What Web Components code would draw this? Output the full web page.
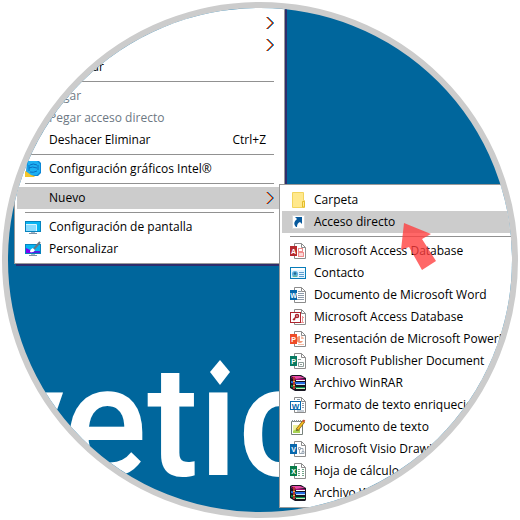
<!DOCTYPE html>
<html lang="es">
<head>
<meta charset="utf-8">
<meta name="viewport" content="width=device-width, initial-scale=1">
<title>Menú contextual del escritorio</title>
<style>
  body {
    margin: 0;
    background: white;
    font-family: "Open Sans", "Noto Sans", sans-serif;
  }

  .main-menu {
    left: 6px;
    top: -1px;
    width: 271px;
  }

  .sub-menu {
    left: 271px;
    top: 176px;
    width: 250px;
  }

  .logo {
    left: -20px;
    top: 334px;
  }

  .pointer {
    left: 393px;
    top: 215px;
  }
</style>
</head>
<body>
<round-frame>
  <brand-wordmark class="logo">vetic</brand-wordmark>

  <context-menu class="main-menu" shadow>
    <menu-entry submenu>Ver</menu-entry>
    <menu-entry submenu>Ordenar por</menu-entry>
    <menu-entry>Actualizar</menu-entry>
    <menu-divider></menu-divider>
    <menu-entry disabled>Pegar</menu-entry>
    <menu-entry disabled>Pegar acceso directo</menu-entry>
    <menu-entry shortcut="Ctrl+Z">Deshacer Eliminar</menu-entry>
    <menu-divider></menu-divider>
    <menu-entry icon="intel">Configuración gráficos Intel®</menu-entry>
    <menu-divider></menu-divider>
    <menu-entry submenu active>Nuevo</menu-entry>
    <menu-divider></menu-divider>
    <menu-entry icon="display">Configuración de pantalla</menu-entry>
    <menu-entry icon="personalize">Personalizar</menu-entry>
  </context-menu>

  <context-menu class="sub-menu">
    <menu-entry icon="folder">Carpeta</menu-entry>
    <menu-entry icon="shortcut" active>Acceso directo</menu-entry>
    <menu-divider></menu-divider>
    <menu-entry icon="access">Microsoft Access Database</menu-entry>
    <menu-entry icon="contact">Contacto</menu-entry>
    <menu-entry icon="word">Documento de Microsoft Word</menu-entry>
    <menu-entry icon="accesskey">Microsoft Access Database</menu-entry>
    <menu-entry icon="powerpoint">Presentación de Microsoft PowerPoint</menu-entry>
    <menu-entry icon="publisher">Microsoft Publisher Document</menu-entry>
    <menu-entry icon="winrar">Archivo WinRAR</menu-entry>
    <menu-entry icon="rtf">Formato de texto enriquecido</menu-entry>
    <menu-entry icon="text">Documento de texto</menu-entry>
    <menu-entry icon="visio">Microsoft Visio Drawing</menu-entry>
    <menu-entry icon="excel">Hoja de cálculo de Microsoft Excel</menu-entry>
    <menu-entry icon="winrar">Archivo WinRAR ZIP</menu-entry>
  </context-menu>

  <red-pointer class="pointer"></red-pointer>
</round-frame>

<script>
// sheet of paper with a folded corner, shared by the Office icons
const page = `
  <path d="M4.5 3V.5h7l4 4v11h-11V13" fill="#fff" stroke="#8c8c8c"/>
  <path d="M11.5.5v4h4" fill="none" stroke="#8c8c8c"/>`;

const badge = (color, letter) => `
  <rect y="3" width="7" height="10" fill="${color}"/>
  <text x="3.5" y="10.6" text-anchor="middle" font-family="Liberation Sans, sans-serif"
    font-weight="700" font-size="7" fill="#fff">${letter}</text>`;

const icons = {
  intel: `
    <path d="M2 0h12l2 2v10l-3 3H4l-3-3z" fill="#0b86d6"/>
    <path d="M3 0h9l3 3v8l-3 3H5l-3-3z" fill="#1cb0f2"/>
    <path d="M5 4q3-2 7 0M4 7q3-2 8 0M5 11q3 1 7-1M4 4v6M13 4v5" fill="none" stroke="#0a6fc0"/>
    <path d="M0 10l2 1 4 3 4 1-1 1H0z" fill="#f2c52c"/>`,
  display: `
    <rect x=".5" y="2.5" width="15" height="10" fill="#08b5f2" stroke="#0783bd"/>
    <path d="M1 6h10v6H1z" fill="#8bdcff"/>
    <path d="M1 5.5h10.5V12" fill="none" stroke="#d9f5ff"/>
    <path d="M6 13h4v1H6z" fill="#a4b5c4"/><path d="M4 14h8v1H4z" fill="#7d93a8"/>`,
  personalize: `
    <rect x=".5" y="3.5" width="15" height="9" fill="#08b5f2" stroke="#0783bd"/>
    <path d="M1 7l4 2 3 3H1z" fill="#7b00f2"/><path d="M8 10h7v2H7z" fill="#5320df"/>
    <path d="M5 11q0-3 3-4l2 2q-1 3-5 2z" fill="#fff"/>
    <path d="M9 8l6-7" stroke="#687784" stroke-width="2"/>
    <path d="M6 13h4v1H6z" fill="#a4b5c4"/><path d="M4 14h8v1H4z" fill="#7d93a8"/>`,
  folder: `
    <path d="M2.5.5h11v8h1v7h-12z" fill="#ffe88c" stroke="#f2d45c"/>
    <path d="M12.5 15V9.5h2V15z" fill="#ffe88c" stroke="#e3bc2a"/>`,
  shortcut: `
    <rect x="2.5" y="1.5" width="12" height="13" fill="#fff" stroke="#d9d9d9"/>
    <path d="M5 3h7v7l-2-2q-3 1-3 5H6q-4-4 1-8z" fill="#07599c"/>`,
  access: page + `
    <rect x="8.5" y="5.5" width="4" height="3" fill="#fff" stroke="#ef8c8c"/>
    <rect x="8.5" y="9.5" width="5" height="4" fill="#fbd6d6" stroke="#ef8c8c"/>
    ` + badge("#b5292e", "A"),
  contact: `
    <rect x=".5" y="2.5" width="15" height="11" fill="#e5f5ff" stroke="#087cb9"/>
    <path d="M1 3h14v2H1z" fill="#fff"/>
    <circle cx="5" cy="9" r="3" fill="#5bb0e0"/>
    <circle cx="5" cy="8.5" r="1.3" fill="#23668c"/>
    <path d="M2 12q3-3 6 0z" fill="#62b894"/>
    <path d="M9 7.5h5M9 9.5h5M9 11.5h5" stroke="#5f9fd0"/>`,
  word: page + `
    <path d="M8 4.500h3M8 6.500h6M8 8.500h6M8 10.500h6M7 12.500h7" stroke="#8c9aaa"/>
    ` + badge("#0868ad", "W"),
  accesskey: page + `
    <path d="M12.5 7v7M10 13.500h4M12 8.500h2" stroke="#ef9a9a"/>
    <rect x=".5" y="3.5" width="10" height="10" fill="#fff" stroke="#ad252e"/>
    <circle cx="7" cy="7" r="1.500" fill="none" stroke="#ad252e" stroke-width="1.500"/>
    <path d="M6 8l-3 3M4 10l1 1" stroke="#ad252e" stroke-width="1.500"/>`,
  powerpoint: page + `
    <path d="M10 5a3.500 3.500 0 1 0 3 5h-3z" fill="#ef9877"/>
    <path d="M11 5v3h3q0-2-3-3z" fill="#f4bba5"/>
    <path d="M8 13.500h6" stroke="#f4bba5"/>
    ` + badge("#ef4b27", "P"),
  publisher: page + `
    <path d="M8 6.500h3M8.500 9.500h5v4h-5zM10 11.500h2" fill="none" stroke="#8c9c98"/>
    ` + badge("#087b62", "P"),
  winrar: `
    <path d="M0 1l2-1h9l5 3v12l-1 1H5l-5-3z" fill="#171421"/>
    <path d="M1 1h9l5 2-9 1z" fill="#e74ba8"/><path d="M1 2l5 2h9v1H6L1 3z" fill="#a30b71"/>
    <path d="M6 5h9v1H6z" fill="#fff"/>
    <path d="M1 6l5 1h9v2H6L1 8z" fill="#276be1"/><path d="M6 9h9v1H6z" fill="#bfe6ff"/>
    <path d="M1 10l5 2h9v1H6l-5-1z" fill="#079451"/><path d="M6 13h9v1H6z" fill="#c5f0bd"/>
    <path d="M3 2h2v12H3z" fill="#b43631"/><path d="M3 6h2v1H3zM3 10h2v1H3z" fill="#f2bd45"/>`,
  rtf: page + `
    <path d="M7 2.500h3M12 6.500h2M12 8.500h2M12 10.500h2M7 14h7" stroke="#8c9aaa"/>
    <rect x=".5" y="4.5" width="10" height="8" fill="#fff" stroke="#0868ad"/>
    <text x="5.5" y="11.5" text-anchor="middle" font-family="Liberation Sans, sans-serif"
      font-weight="700" font-size="8" fill="#0868ad">W</text>`,
  text: `
    <path d="M1.5 2.5h11v13h-11z" fill="#fff" stroke="#77817b"/>
    <path d="M2.500 1v2M4.500 1v2M6.500 1v2M8.500 1v2M10.500 1v2" stroke="#8f9698"/>
    <path d="M3 6h7v8H3z" fill="#eff29c"/><path d="M3 12l7-4v6H3z" fill="#a8d453"/>
    <path d="M7 11l7-9" stroke="#805c16" stroke-width="3"/>
    <path d="M7 11l7-9" stroke="#f2bd20" stroke-width="2"/>
    <path d="M13 3l1.500-2" stroke="#c94b37" stroke-width="2"/>
    <path d="M6 12l1-2 1 1z" fill="#333"/>`,
  visio: page + `
    <path d="M8.500 6.500h2v2h-2zM12 10.500h2v2h-2zM10.500 7.500h2.500V10M9.500 9v3.500H12" fill="none" stroke="#9aa7b5"/>
    ` + badge("#0868ad", "V"),
  excel: page + `
    <path d="M8 6.500h2M12 6.500h2M8 8.500h2M12 8.500h2M8 10.500h2M12 10.500h2M8 12.500h2M12 12.500h2" stroke="#73a88a"/>
    ` + badge("#087b48", "X")
};

class RoundFrame extends HTMLElement {
  constructor() {
    super();
    this.attachShadow({ mode: "open" });
    this.shadowRoot.innerHTML = `
      <style>
        :host {
          display: block;
          box-sizing: border-box;
          position: relative;
          margin: 2px;
          aspect-ratio: 1;
          overflow: hidden;
          border: 6px solid #ccc;
          border-radius: 50%;
          background: #00669c;
        }

        ::slotted(*) {
          position: absolute;
        }
      </style>
      <slot></slot>
    `;
  }
}
customElements.define("round-frame", RoundFrame);

class BrandWordmark extends HTMLElement {
  constructor() {
    super();
    this.attachShadow({ mode: "open" });
    this.shadowRoot.innerHTML = `
      <style>
        :host {
          display: block;
          color: white;
          font: 500 155px/160px Roboto, sans-serif;
        }

        svg {
          position: absolute;
          left: 216px;
          top: 14px;
          background: #00669c;
        }
      </style>
      <slot></slot>
      <svg width="32" height="32" viewBox="0 0 32 32" aria-hidden="true">
        <path d="M16 4l10 12-10 13L6 16z" fill="#fff"/>
      </svg>
    `;
  }
}
customElements.define("brand-wordmark", BrandWordmark);

class ContextMenu extends HTMLElement {
  constructor() {
    super();
    this.attachShadow({ mode: "open" });
    this.shadowRoot.innerHTML = `
      <style>
        :host {
          display: block;
          box-sizing: border-box;
          padding: 4px 2px 3px;
          border: 1px solid #999;
          background: white;
        }

        :host([shadow]) {
          box-shadow: 2px 2px #2f2d6c;
        }

        div {
          display: flex;
          flex-direction: column;
        }
      </style>
      <div role="menu">
        <slot></slot>
      </div>
    `;
  }
}
customElements.define("context-menu", ContextMenu);

class MenuDivider extends HTMLElement {
  constructor() {
    super();
    this.attachShadow({ mode: "open" });
    this.shadowRoot.innerHTML = `
      <style>
        :host {
          display: block;
          padding: 3px 8px;
        }

        hr {
          margin: 0;
          border: 0;
          border-top: 1px solid #919191;
        }
      </style>
      <hr>
    `;
  }
}
customElements.define("menu-divider", MenuDivider);

class MenuEntry extends HTMLElement {
  constructor() {
    super();
    this.attachShadow({ mode: "open" });
  }

  connectedCallback() {
    const icon = icons[this.getAttribute("icon")] || "";
    const shortcut = this.getAttribute("shortcut");
    const disabled = this.hasAttribute("disabled") ? "disabled" : "";

    this.shadowRoot.innerHTML = `
      <style>
        :host {
          display: block;
        }

        button {
          display: flex;
          align-items: center;
          gap: 8px;
          box-sizing: border-box;
          width: 100%;
          height: 22px;
          padding: 0 8px;
          border: 0;
          background: none;
          color: black;
          font: 12px/22px "Open Sans", "Noto Sans", sans-serif;
          text-align: left;
          white-space: nowrap;
        }

        button:disabled {
          color: #6d7883;
        }

        button:hover:enabled,
        :host([active]) button {
          background: #ccc;
        }

        svg {
          flex: none;
        }

        .label {
          flex: 1;
        }

        .shortcut {
          padding-right: 8px;
        }
      </style>
      <button type="button" role="menuitem" ${disabled}>
        <svg width="16" height="16" viewBox="0 0 16 16" aria-hidden="true">${icon}</svg>
        <span class="label"><slot></slot></span>
        ${shortcut ? `<span class="shortcut">${shortcut}</span>` : ""}
        ${this.hasAttribute("submenu") ? `
          <svg width="8" height="14" viewBox="0 0 8 14" aria-hidden="true" fill="none">
            <path d="M0 1l6 6-6 6" stroke="#f0a040"/>
            <path d="M2 1l6 6-6 6" stroke="#20a8e8"/>
            <path d="M1 1l6 6-6 6" stroke="#a01828"/>
          </svg>` : ""}
      </button>
    `;
  }
}
customElements.define("menu-entry", MenuEntry);

class RedPointer extends HTMLElement {
  constructor() {
    super();
    this.attachShadow({ mode: "open" });
    this.shadowRoot.innerHTML = `
      <style>
        :host {
          display: block;
          pointer-events: none;
        }

        svg {
          display: block;
        }
      </style>
      <svg width="44" height="56" viewBox="0 0 44 56" aria-hidden="true">
        <path d="M3 0l27 11-9 5 14 22-14 9L8 24l-8 3z" fill="#ff3c3c" fill-opacity=".78"/>
      </svg>
    `;
  }
}
customElements.define("red-pointer", RedPointer);
</script>
</body>
</html>
